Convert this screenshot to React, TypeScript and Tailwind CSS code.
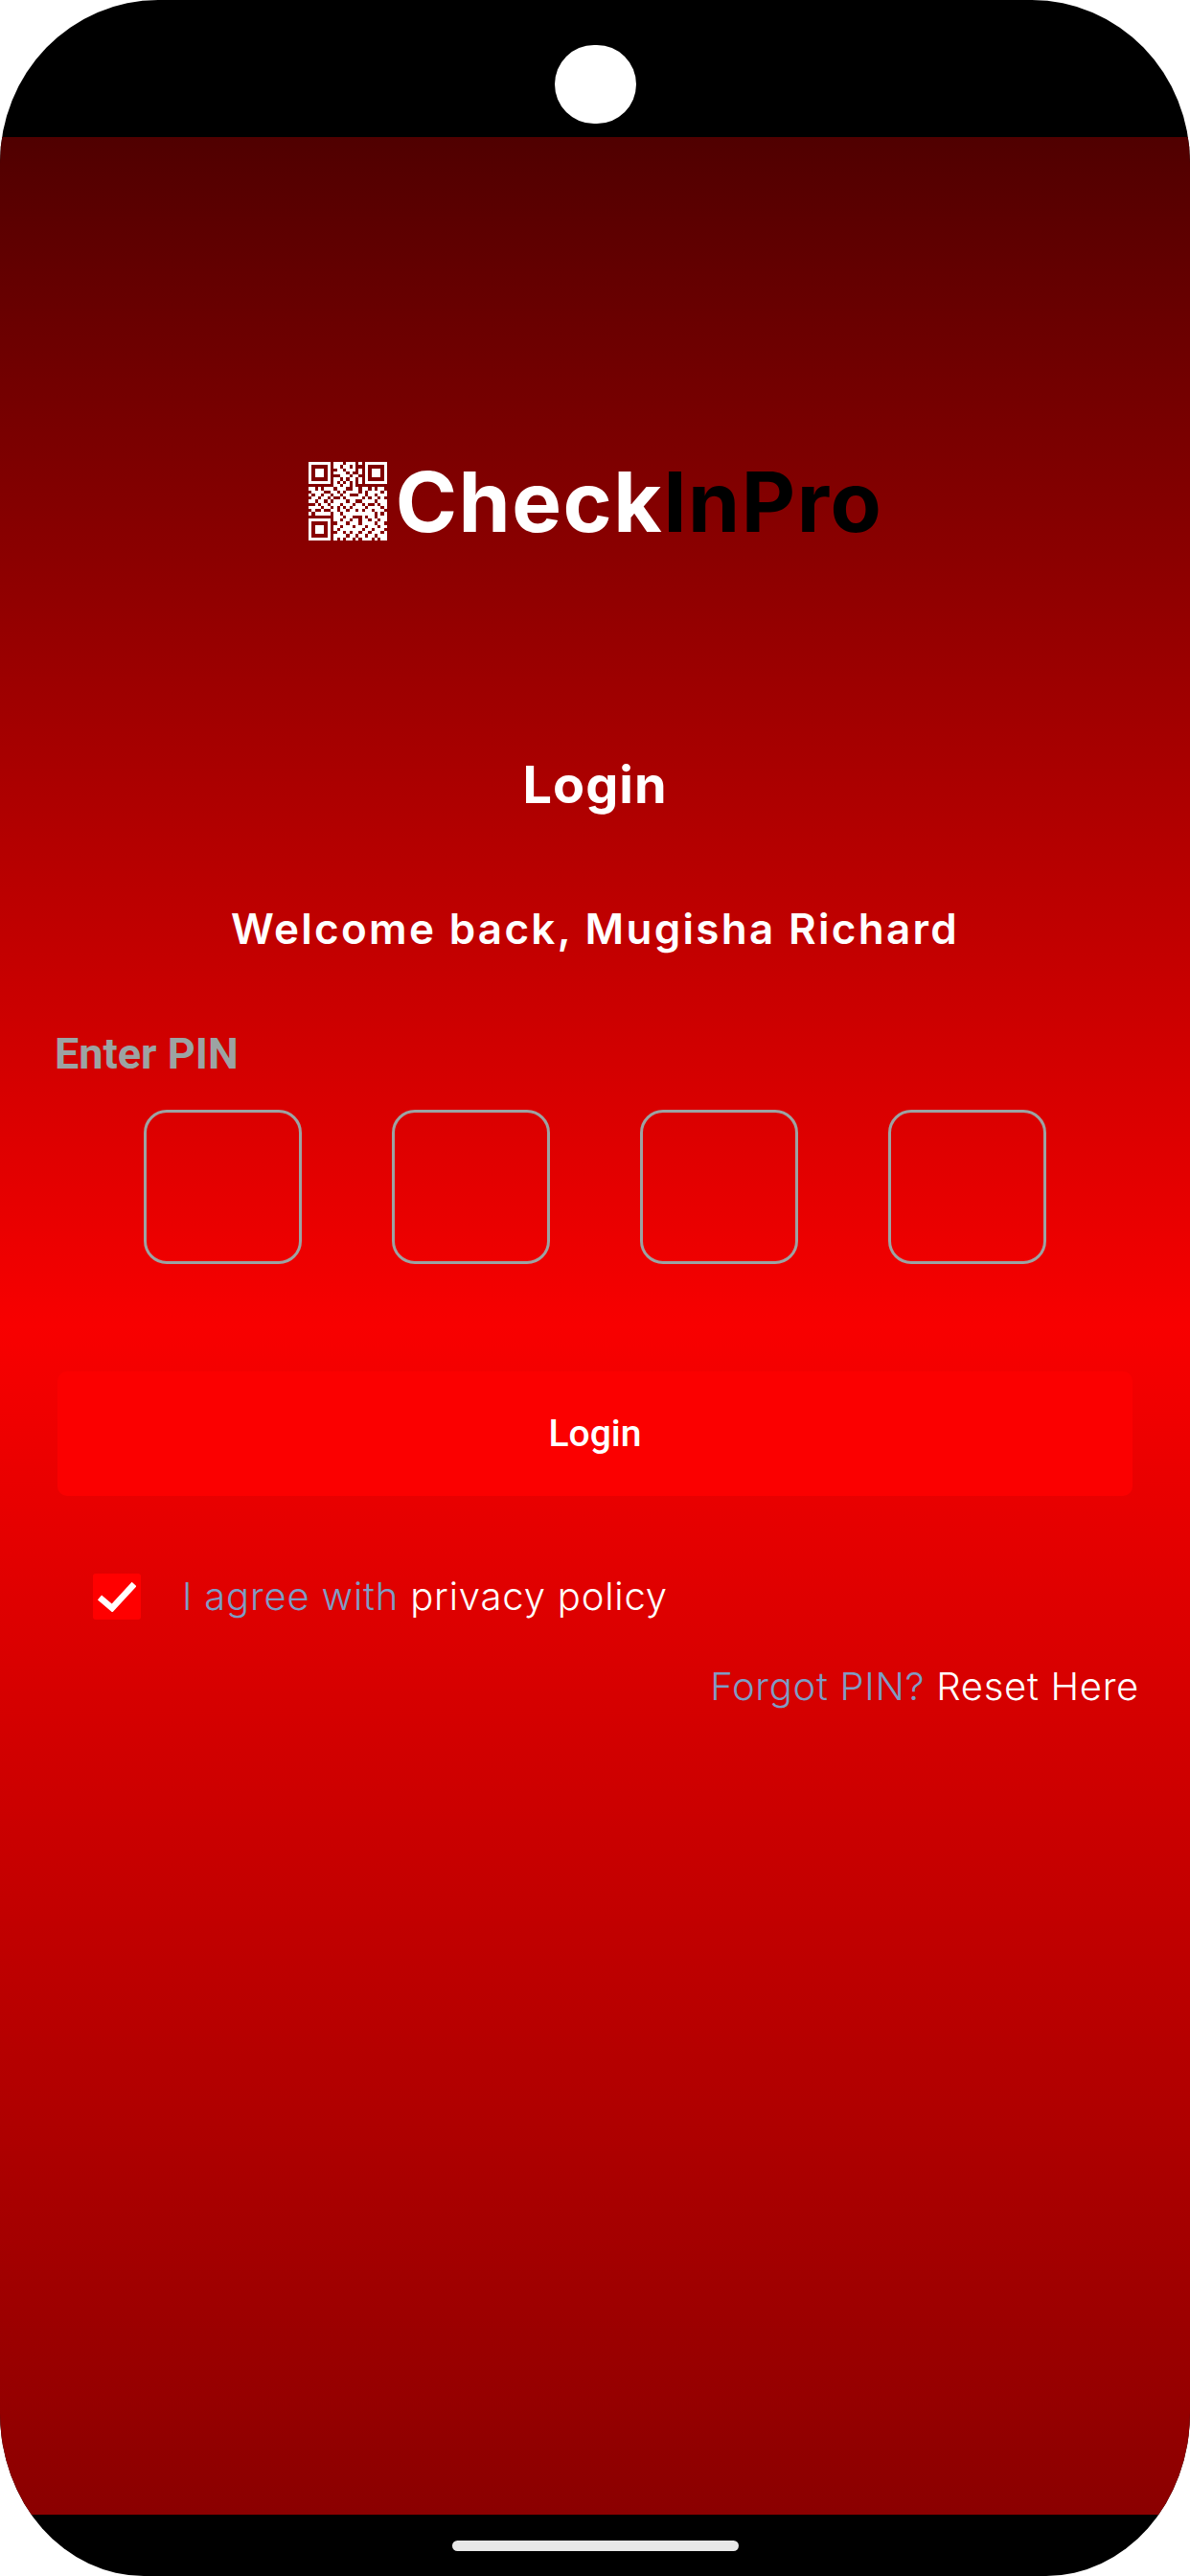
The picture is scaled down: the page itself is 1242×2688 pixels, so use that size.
const qr = [
  "1111111011101110101111111",
  "1000001011011010001000001",
  "1011101001101110101011101",
  "1011101011110100101011101",
  "1011101000111011001011101",
  "1000001011010110101000001",
  "1111111010101010101111111",
  "0000000011011010000000000",
  "1101011101110011011010110",
  "0111100110101111010111101",
  "1011011011011000110110111",
  "0110110100101111101011010",
  "1101101011110110011110111",
  "0010110111011101101001011",
  "1111011010101011110111101",
  "0100100110110110101101110",
  "1011111011011111111110101",
  "0000000011101100010110111",
  "1111111011011011011011011",
  "1000001001110111011110110",
  "1011101011011101110111011",
  "1011101010111111101101110",
  "1011101001101011011011101",
  "1000001011110110110110111",
  "1111111010101101011101011",
];

function QrLogo() {
  return (
    <svg width="84" height="82" viewBox="0 0 25 25" shapeRendering="crispEdges" className="shrink-0">
      {qr.flatMap((row, y) =>
        row.split("").map((cell, x) =>
          cell === "1" ? <rect key={`${x}-${y}`} x={x} y={y} width="1" height="1" fill="#fff" /> : null
        )
      )}
    </svg>
  );
}

function PinBox() {
  return <div className="h-[161px] w-[165px] rounded-[24px] border-[3px] border-[#9ca3a3]" />;
}

export default function App() {
  return (
    <div className="h-[2688px] w-[1242px] bg-white">
      <div className="flex h-full w-full flex-col overflow-hidden rounded-[165px_165px_150px_150px/170px_170px_170px_170px] bg-black">
        <div className="flex h-[143px] shrink-0 items-start justify-center pt-[47px]">
          <div className="h-[82px] w-[85px] rounded-full bg-white" />
        </div>
        <div className="flex h-[2481px] shrink-0 flex-col bg-[linear-gradient(180deg,#500000_0%,#f80000_50%,#8b0000_100%)]">
          <div className="flex items-center justify-center gap-[8px] pt-[338px]">
            <QrLogo />
            <div className="pt-[2px] font-['Inter',sans-serif] text-[87px] leading-[82px] font-bold tracking-[1.5px]">
              <span className="text-white">Check</span>
              <span className="text-black">InPro</span>
            </div>
          </div>
          <h1 className="mt-[224px] text-center font-['Inter',sans-serif] text-[54px] leading-[60px] font-bold tracking-[1px] text-white">
            Login
          </h1>
          <p className="mt-[92px] text-center font-['Inter',sans-serif] text-[44px] leading-[56px] font-semibold tracking-[2.3px] text-white">
            Welcome back, Mugisha Richard
          </p>
          <div className="mt-[78px] pl-[57px] font-['Roboto',sans-serif] text-[45px] leading-[50px] font-bold text-[#9ca3a3]">
            Enter PIN
          </div>
          <div className="mt-[33px] flex justify-center gap-[94px]">
            <PinBox />
            <PinBox />
            <PinBox />
            <PinBox />
          </div>
          <div className="mx-[60px] mt-[112px] flex h-[130px] items-center justify-center rounded-[10px] bg-[#fb0000] font-['Roboto',sans-serif] text-[39px] font-medium text-white">
            Login
          </div>
          <div className="mt-[80px] flex items-center pl-[97px]">
            <div className="flex h-[48px] w-[50px] items-center justify-center rounded-[3px] bg-[#ff0000]">
              <svg width="40" height="32" viewBox="0 0 40 32" fill="none">
                <path d="M2 17 L15 28 L38 3" stroke="#fff" strokeWidth="6.5" />
              </svg>
            </div>
            <p className="ml-[43px] font-['Inter',sans-serif] text-[40px] leading-[50px] font-light tracking-[0.8px] text-white">
              <span className="text-[#7f9cc4]">I agree with</span> privacy policy
            </p>
          </div>
          <p className="mt-[44px] pr-[53px] text-right font-['Inter',sans-serif] text-[40px] leading-[50px] font-light tracking-[0.7px] text-white">
            <span className="text-[#7f9cc4]">Forgot PIN?</span> Reset Here
          </p>
        </div>
        <div className="flex flex-1 justify-center pt-[27px]">
          <div className="h-[11px] w-[299px] rounded-full bg-[#e8e8e8]" />
        </div>
      </div>
    </div>
  );
}
